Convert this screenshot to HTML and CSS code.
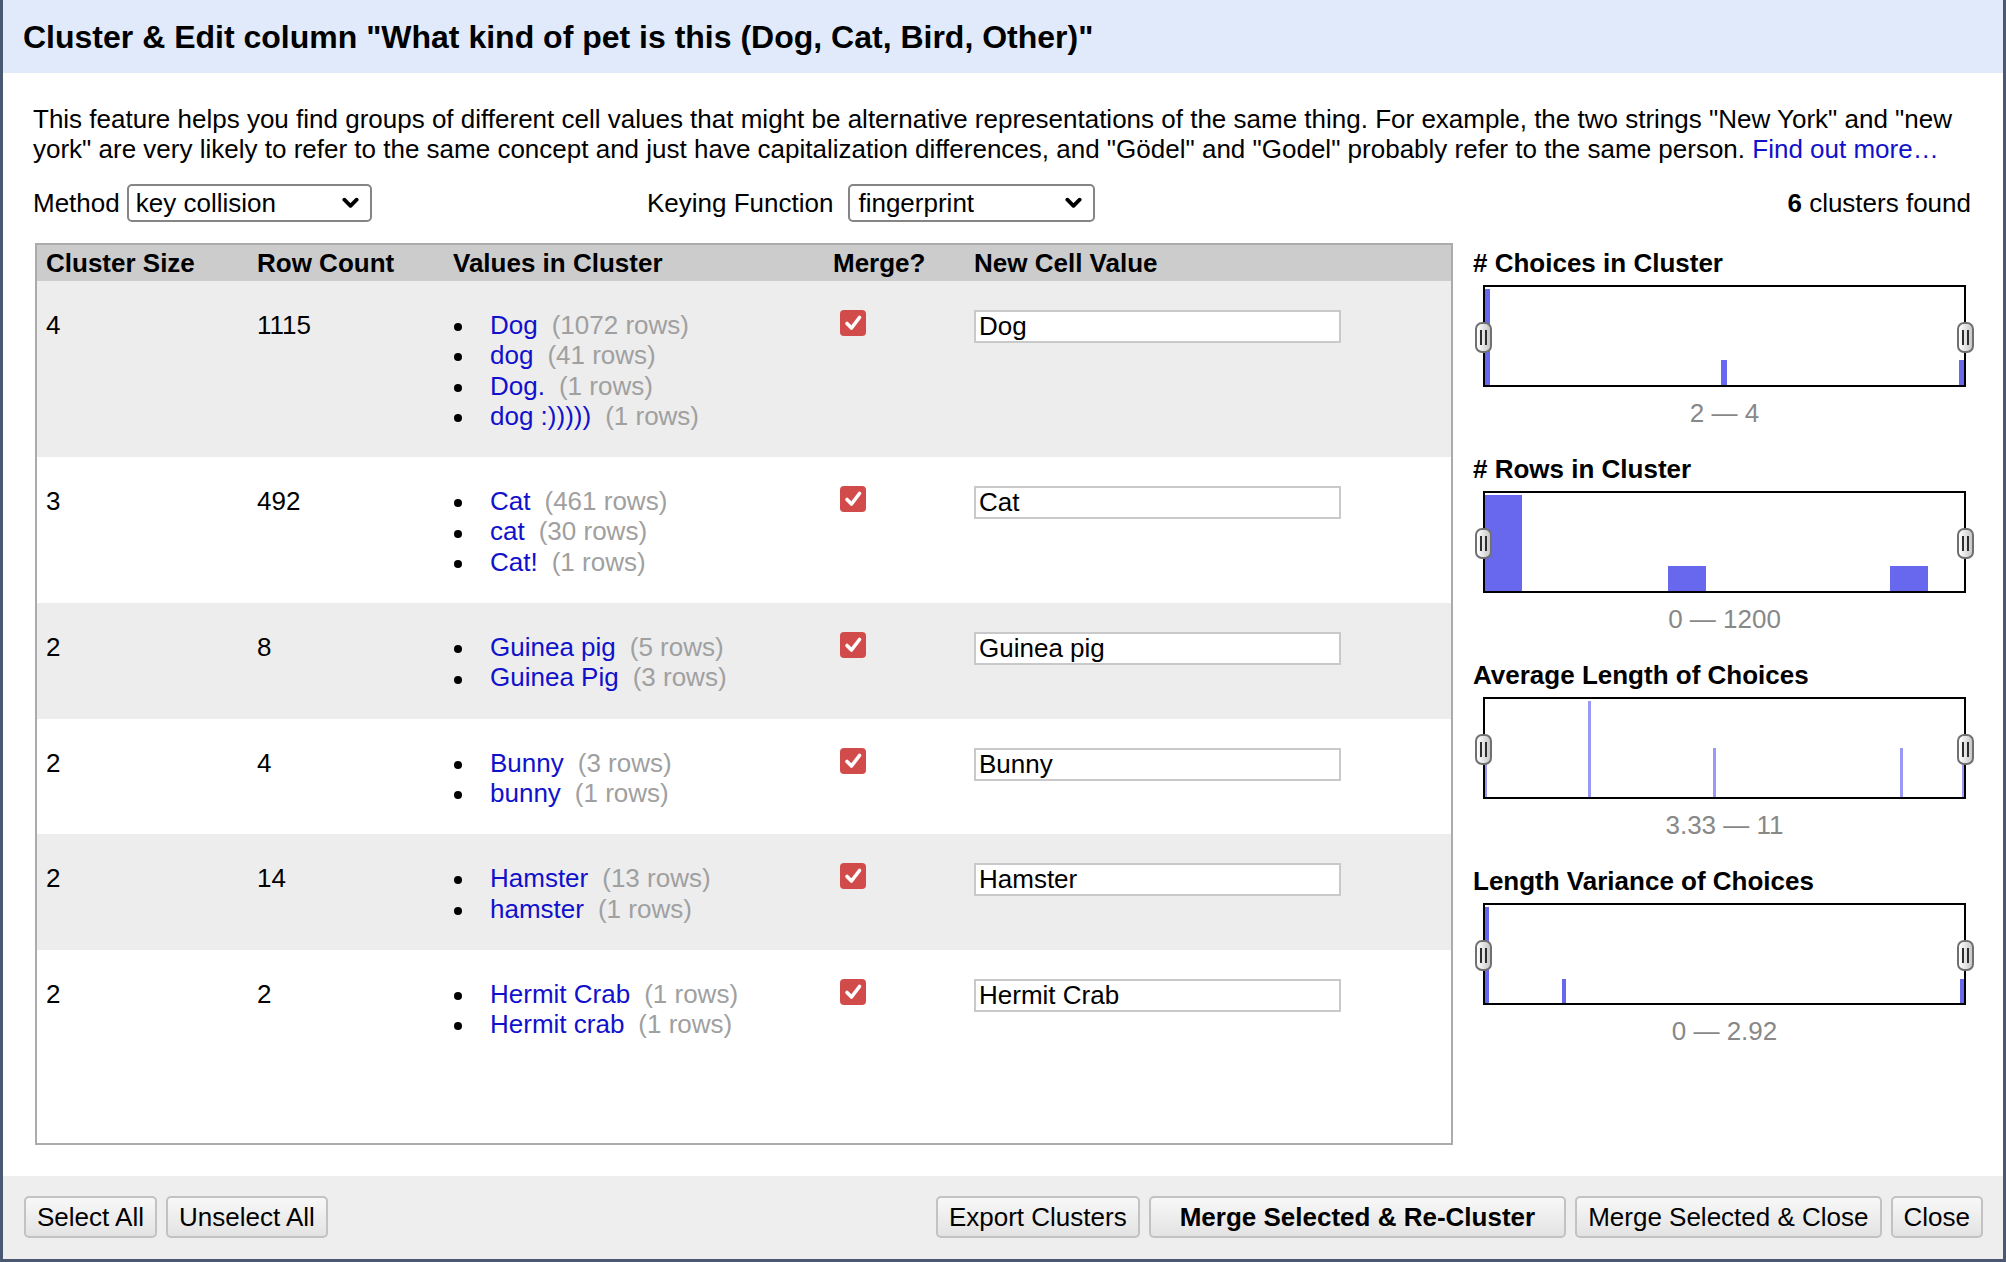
FILE: index.html
```html
<!DOCTYPE html>
<html lang="en">
<head>
<meta charset="utf-8">
<title>Cluster &amp; Edit</title>
<link rel="stylesheet" href="styles.css">
</head>
<body>
<div class="dialog">
  <div class="titlebar"><h1>Cluster &amp; Edit column "What kind of pet is this (Dog, Cat, Bird, Other)"</h1></div>
  <div class="content">
    <p class="desc">This feature helps you find groups of different cell values that might be alternative representations of the same thing. For example, the two strings "New York" and "new york" are very likely to refer to the same concept and just have capitalization differences, and "Gödel" and "Godel" probably refer to the same person. <a class="link" href="#">Find out more…</a></p>
    <div class="controls">
      <div class="ctl">
        <span class="ctl-label">Method</span>
        <div class="select sel-method"><span>key collision</span><svg class="chev" viewBox="0 0 18 12"><polyline points="2.5,2.5 9,9 15.5,2.5"/></svg></div>
      </div>
      <div class="ctl">
        <span class="ctl-label kf">Keying Function</span>
        <div class="select sel-key"><span>fingerprint</span><svg class="chev" viewBox="0 0 18 12"><polyline points="2.5,2.5 9,9 15.5,2.5"/></svg></div>
      </div>
      <div class="found"><b>6</b> clusters found</div>
    </div>
    <div class="main">
      <div class="table-wrap">
        <table class="clusters">
          <colgroup>
            <col class="c1"><col class="c2"><col class="c3"><col class="c4"><col class="c5">
          </colgroup>
          <thead>
            <tr><th>Cluster Size</th><th>Row Count</th><th>Values in Cluster</th><th>Merge?</th><th>New Cell Value</th></tr>
          </thead>
          <tbody>
            <tr class="odd">
              <td>4</td><td>1115</td>
              <td><ul class="vals">
                <li><a class="link" href="#">Dog</a><span class="cnt">(1072 rows)</span></li>
                <li><a class="link" href="#">dog</a><span class="cnt">(41 rows)</span></li>
                <li><a class="link" href="#">Dog.</a><span class="cnt">(1 rows)</span></li>
                <li><a class="link" href="#">dog :)))))</a><span class="cnt">(1 rows)</span></li>
              </ul></td>
              <td><span class="check"><svg viewBox="0 0 26 26"><polyline points="7,13.5 11.5,18 19.5,7.5"/></svg></span></td>
              <td><div class="newval">Dog</div></td>
            </tr>
            <tr class="even">
              <td>3</td><td>492</td>
              <td><ul class="vals">
                <li><a class="link" href="#">Cat</a><span class="cnt">(461 rows)</span></li>
                <li><a class="link" href="#">cat</a><span class="cnt">(30 rows)</span></li>
                <li><a class="link" href="#">Cat!</a><span class="cnt">(1 rows)</span></li>
              </ul></td>
              <td><span class="check"><svg viewBox="0 0 26 26"><polyline points="7,13.5 11.5,18 19.5,7.5"/></svg></span></td>
              <td><div class="newval">Cat</div></td>
            </tr>
            <tr class="odd">
              <td>2</td><td>8</td>
              <td><ul class="vals">
                <li><a class="link" href="#">Guinea pig</a><span class="cnt">(5 rows)</span></li>
                <li><a class="link" href="#">Guinea Pig</a><span class="cnt">(3 rows)</span></li>
              </ul></td>
              <td><span class="check"><svg viewBox="0 0 26 26"><polyline points="7,13.5 11.5,18 19.5,7.5"/></svg></span></td>
              <td><div class="newval">Guinea pig</div></td>
            </tr>
            <tr class="even">
              <td>2</td><td>4</td>
              <td><ul class="vals">
                <li><a class="link" href="#">Bunny</a><span class="cnt">(3 rows)</span></li>
                <li><a class="link" href="#">bunny</a><span class="cnt">(1 rows)</span></li>
              </ul></td>
              <td><span class="check"><svg viewBox="0 0 26 26"><polyline points="7,13.5 11.5,18 19.5,7.5"/></svg></span></td>
              <td><div class="newval">Bunny</div></td>
            </tr>
            <tr class="odd">
              <td>2</td><td>14</td>
              <td><ul class="vals">
                <li><a class="link" href="#">Hamster</a><span class="cnt">(13 rows)</span></li>
                <li><a class="link" href="#">hamster</a><span class="cnt">(1 rows)</span></li>
              </ul></td>
              <td><span class="check"><svg viewBox="0 0 26 26"><polyline points="7,13.5 11.5,18 19.5,7.5"/></svg></span></td>
              <td><div class="newval">Hamster</div></td>
            </tr>
            <tr class="even">
              <td>2</td><td>2</td>
              <td><ul class="vals">
                <li><a class="link" href="#">Hermit Crab</a><span class="cnt">(1 rows)</span></li>
                <li><a class="link" href="#">Hermit crab</a><span class="cnt">(1 rows)</span></li>
              </ul></td>
              <td><span class="check"><svg viewBox="0 0 26 26"><polyline points="7,13.5 11.5,18 19.5,7.5"/></svg></span></td>
              <td><div class="newval">Hermit Crab</div></td>
            </tr>
          </tbody>
        </table>
      </div>
      <div class="facets">
        <div class="facet">
          <div class="facet-title"># Choices in Cluster</div>
          <div class="hist">
            <span class="bar" style="left:0;width:5px;height:96px"></span>
            <span class="bar" style="left:236px;width:6px;height:25px"></span>
            <span class="bar" style="left:474px;width:5px;height:25px"></span>
            <span class="handle hl"></span><span class="handle hr"></span>
          </div>
          <div class="range">2 — 4</div>
        </div>
        <div class="facet">
          <div class="facet-title"># Rows in Cluster</div>
          <div class="hist">
            <span class="bar" style="left:0;width:37px;height:96px"></span>
            <span class="bar" style="left:183px;width:38px;height:25px"></span>
            <span class="bar" style="left:405px;width:38px;height:25px"></span>
            <span class="handle hl"></span><span class="handle hr"></span>
          </div>
          <div class="range">0 — 1200</div>
        </div>
        <div class="facet">
          <div class="facet-title">Average Length of Choices</div>
          <div class="hist">
            <span class="bar light" style="left:0;width:2px;height:49px"></span>
            <span class="bar light" style="left:103px;width:3px;height:96px"></span>
            <span class="bar light" style="left:228px;width:3px;height:49px"></span>
            <span class="bar light" style="left:415px;width:3px;height:49px"></span>
            <span class="bar light" style="left:477px;width:2px;height:49px"></span>
            <span class="handle hl"></span><span class="handle hr"></span>
          </div>
          <div class="range">3.33 — 11</div>
        </div>
        <div class="facet">
          <div class="facet-title">Length Variance of Choices</div>
          <div class="hist">
            <span class="bar" style="left:0;width:4px;height:96px"></span>
            <span class="bar" style="left:77px;width:4px;height:24px"></span>
            <span class="bar" style="left:475px;width:4px;height:24px"></span>
            <span class="handle hl"></span><span class="handle hr"></span>
          </div>
          <div class="range">0 — 2.92</div>
        </div>
      </div>
    </div>
  </div>
  <div class="footer">
    <div class="btns">
      <button class="btn">Select All</button>
      <button class="btn">Unselect All</button>
    </div>
    <div class="btns">
      <button class="btn">Export Clusters</button>
      <button class="btn primary">Merge Selected &amp; Re-Cluster</button>
      <button class="btn">Merge Selected &amp; Close</button>
      <button class="btn">Close</button>
    </div>
  </div>
</div>
</body>
</html>
```
FILE: styles.css
```css
html, body {
  margin: 0;
  padding: 0;
  background: #fff;
}
body {
  font-family: "Liberation Sans", Arial, Helvetica, sans-serif;
  font-size: 26px;
  color: #000;
}
.dialog {
  width: 2006px;
  height: 1262px;
  box-sizing: border-box;
  border: 3px solid #4b5871;
  border-top: 0;
  display: flex;
  flex-direction: column;
  background: #fff;
}
.titlebar {
  flex: none;
  height: 73px;
  background: #e0eafa;
  display: flex;
  align-items: center;
  padding-left: 20px;
}
.titlebar h1 {
  margin: 0;
  font-size: 32px;
  font-weight: bold;
  line-height: 36px;
}
.content {
  flex: 1;
  padding: 0 30px;
}
.desc {
  margin: 31px 0 0;
  line-height: 30px;
}
.link {
  color: #1111cc;
  text-decoration: none;
}
.controls {
  margin-top: 20px;
  height: 38px;
  display: grid;
  grid-template-columns: 614px auto 1fr;
  align-items: center;
}
.ctl {
  display: flex;
  align-items: center;
}
.ctl-label {
  margin-right: 7px;
}
.ctl-label.kf {
  margin-right: 15px;
}
.select {
  box-sizing: border-box;
  height: 38px;
  border: 2px solid #858585;
  border-radius: 5px;
  display: flex;
  align-items: center;
  justify-content: space-between;
  padding: 0 11px 0 7px;
  background: #fff;
}
.sel-method { width: 245px; }
.sel-key { width: 247px; padding-left: 8px; }
.chev {
  width: 17px;
  height: 12px;
}
.chev polyline {
  fill: none;
  stroke: #000;
  stroke-width: 4;
  stroke-linecap: round;
  stroke-linejoin: round;
}
.found {
  justify-self: end;
  padding-right: 2px;
}
.main {
  display: flex;
  margin-top: 21px;
}
.table-wrap {
  flex: none;
  width: 1418px;
  height: 902px;
  box-sizing: border-box;
  border: 2px solid #ababab;
  margin-left: 2px;
  overflow: hidden;
}
.clusters {
  width: 100%;
  border-collapse: collapse;
  table-layout: fixed;
}
.c1 { width: 211px; }
.c2 { width: 196px; }
.c3 { width: 380px; }
.c4 { width: 141px; }
.c5 { width: 486px; }
.clusters th {
  background: #cccccc;
  height: 36px;
  padding: 0 9px;
  text-align: left;
  font-weight: bold;
  vertical-align: middle;
  line-height: 30px;
}
.clusters td {
  vertical-align: top;
  padding: 29px 9px 26px;
  line-height: 30px;
}
.odd { background: #ededed; }
.even { background: #fff; }
.vals {
  list-style: none;
  margin: 0;
  padding: 0;
}
.vals li {
  white-space: nowrap;
  line-height: 30.3px;
}
.vals li::before {
  content: "";
  display: inline-block;
  width: 8px;
  height: 8px;
  border-radius: 50%;
  background: #000;
  margin: 0 28px 0 1px;
  vertical-align: middle;
}
.cnt {
  color: #a0a0a0;
  margin-left: 14px;
}
.check {
  display: block;
  width: 26px;
  height: 26px;
  margin-left: 7px;
  border-radius: 4px;
  background: #d24b4b;
}
.check svg {
  display: block;
  width: 26px;
  height: 26px;
}
.check polyline {
  fill: none;
  stroke: #fff;
  stroke-width: 3.6;
  stroke-linecap: round;
  stroke-linejoin: round;
}
.newval {
  box-sizing: border-box;
  width: 367px;
  height: 33px;
  border: 2px solid #c9c9c9;
  background: #fff;
  padding: 0 3px;
  line-height: 29px;
  white-space: nowrap;
}
.facets {
  flex: none;
  width: 500px;
  margin-left: 20px;
  padding-top: 5px;
}
.facet + .facet {
  margin-top: 26px;
}
.facet-title {
  font-weight: bold;
  line-height: 30px;
}
.hist {
  position: relative;
  box-sizing: border-box;
  width: 483px;
  height: 102px;
  margin: 7px 0 0 10px;
  border: 2px solid #000;
  background: #fff;
}
.bar {
  position: absolute;
  bottom: 0;
  background: #6868ef;
}
.bar.light {
  background: #9a9af6;
}
.handle {
  position: absolute;
  top: 50%;
  width: 17px;
  height: 31px;
  margin-top: -14px;
  box-sizing: border-box;
  border: 2px solid #707070;
  border-radius: 7px;
  background: linear-gradient(to right, #ffffff, #c8c8c8);
}
.handle::after {
  content: "";
  position: absolute;
  left: 3px;
  top: 6px;
  bottom: 6px;
  width: 3px;
  border-left: 2px solid #2e2e2e;
  border-right: 2px solid #2e2e2e;
}
.hl { left: -10px; }
.hr { right: -10px; }
.range {
  width: 483px;
  margin: 11px 0 0 10px;
  text-align: center;
  color: #888;
  line-height: 30px;
}
.footer {
  flex: none;
  height: 83px;
  box-sizing: border-box;
  background: #eeeeee;
  display: flex;
  justify-content: space-between;
  align-items: flex-start;
  padding: 20px 20px 0 21px;
}
.btns {
  display: flex;
  gap: 9px;
}
.btn {
  font-family: "Liberation Sans", Arial, Helvetica, sans-serif;
  font-size: 26px;
  color: #000;
  height: 42px;
  padding: 0 11px;
  border: 2px solid #c2c2c2;
  border-radius: 5px;
  background: linear-gradient(to bottom, #f8f8f8, #e3e3e3);
  line-height: 36px;
}
.btn.primary {
  font-weight: bold;
  padding: 0 29px;
}
```
